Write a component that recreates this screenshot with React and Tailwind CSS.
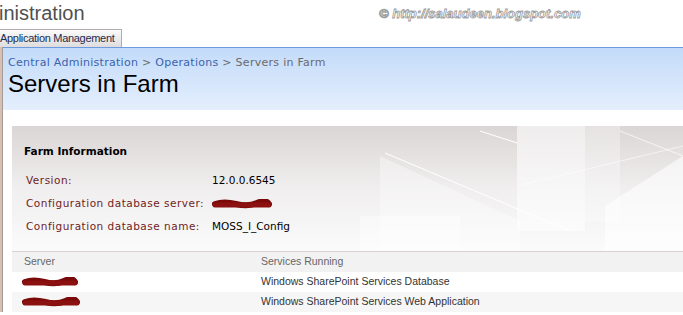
import React from 'react';

const INFO = [
  { label: 'Version:', value: '12.0.0.6545' },
  { label: 'Configuration database server:', redacted: true },
  { label: 'Configuration database name:', value: 'MOSS_I_Config' },
];

const SERVERS = [
  { service: 'Windows SharePoint Services Database', shade: false },
  { service: 'Windows SharePoint Services Web Application', shade: true },
];

function Redacted({ w = 60 }) {
  // scribbled-out name
  return (
    <svg width={w} height="10" viewBox={`0 0 ${w} 10`} className="inline-block align-middle">
      <path
        d={`M3 5 Q${w * 0.2} 2 ${w * 0.4} 5 T${w * 0.75} 4 T${w - 3} 5`}
        stroke="#7a0a0a"
        strokeWidth="6"
        strokeLinecap="round"
        fill="none"
      />
      <path d={`M3 6 L${w - 3} 6`} stroke="#8b1010" strokeWidth="5" strokeLinecap="round" />
    </svg>
  );
}

export default function App() {
  return (
    <div className="w-[683px] h-[315px] overflow-hidden bg-white relative font-['DejaVu_Sans',sans-serif]">
      {/* top title */}
      <div className="h-[29px] flex items-start">
        <span className="font-['Liberation_Sans',sans-serif] text-[20px] leading-[27px] text-[#505050] ml-[-1px] w-[85px] whitespace-nowrap">inistration</span>
        <span className="ml-[295px] mt-[6px] italic font-bold text-[13px] leading-[15px] text-white font-['Liberation_Sans',sans-serif] [-webkit-text-stroke:0.8px_#9a9a9a] whitespace-nowrap">
          © http://salaudeen.blogspot.com
        </span>
      </div>

      {/* tab */}
      <div className="h-[18px] flex">
        <div className="w-[122px] h-[18px] border-t border-r border-[#b3abab] bg-gradient-to-b from-[#fbfbfb] to-[#dedcdc] font-['Liberation_Sans',sans-serif] text-[11px] tracking-[-0.3px] leading-[17px] text-[#1d2b4f] whitespace-nowrap">
          Application Management
        </div>
      </div>

      {/* body with left strip */}
      <div className="flex">
        <div className="w-[2px] bg-[#d9bfb1] shrink-0" />
        <div className="w-px bg-[#a39a9a] shrink-0" />
        <div className="flex-1 min-w-0">
          {/* blue title band */}
          <div className="h-[63px] border-t border-[#6e9be0] bg-gradient-to-b from-[#c3dbf9] to-[#e4effd] pl-[5px] pt-[8px]">
            <div className="text-[11px] leading-[13px] text-[#6a6a6a] tracking-[0.28px] whitespace-nowrap">
              <span className="text-[#3b63ad]">Central Administration</span>
              <span> &gt; </span>
              <span className="text-[#3b63ad]">Operations</span>
              <span> &gt; Servers in Farm</span>
            </div>
            <div className="font-['Liberation_Sans',sans-serif] text-[24px] leading-[28px] text-black mt-[1px]">Servers in Farm</div>
          </div>

          {/* gap */}
          <div className="h-[16px]" />

          {/* farm info panel */}
          <div className="ml-[9px] relative h-[125px] bg-gradient-to-b from-[#dbd6d6] via-[#f0eeee] to-[#fbfbfb] overflow-hidden">
            <svg className="absolute right-0 top-0" width="343" height="125" viewBox="0 0 343 125">
              <rect x="177" y="0" width="68" height="105" fill="#ffffff" opacity="0.55" />
              <rect x="245" y="0" width="35" height="95" fill="#ffffff" opacity="0.3" />
              <polygon points="265,80 343,30 343,125 265,125" fill="#ffffff" opacity="0.6" />
              <polygon points="40,30 180,95 180,125 40,125" fill="#ffffff" opacity="0.35" />
              <polygon points="20,90 120,90 120,125 20,125" fill="#ffffff" opacity="0.4" />
              <line x1="140" y1="5" x2="177" y2="17" stroke="#ffffff" strokeWidth="1" />
              <line x1="45" y1="27" x2="230" y2="105" stroke="#ffffff" strokeWidth="1" />
              <line x1="280" y1="5" x2="343" y2="30" stroke="#ffffff" strokeWidth="1" opacity="0.7" />
              <line x1="177" y1="60" x2="343" y2="20" stroke="#ffffff" strokeWidth="1" opacity="0.6" />
            </svg>
            <div className="relative pl-[12px] pt-[19px]">
              <div className="text-[10.5px] leading-[13px] font-bold text-black">Farm Information</div>
              <div className="mt-[16px] flex flex-col gap-[10px]">
                {INFO.map((row) => (
                  <div key={row.label} className="flex items-center h-[13px] text-[10.5px] leading-[13px]">
                    <span className="w-[188px] pl-[2px] text-[#6e2424] tracking-[0.5px] whitespace-nowrap">{row.label}</span>
                    {row.redacted ? (
                      <Redacted w={60} />
                    ) : (
                      <span className="text-black">{row.value}</span>
                    )}
                  </div>
                ))}
              </div>
            </div>
          </div>

          {/* servers table */}
          <div className="ml-[9px] border-t border-[#d9d1d1] font-['Liberation_Sans',sans-serif] text-[10.5px] text-[#333]">
            <div className="flex h-[20px] items-center bg-[#f2f2f2] text-[#666]">
              <span className="w-[249px] pl-[12px]">Server</span>
              <span>Services Running</span>
            </div>
            {SERVERS.map((s, i) => (
              <div key={i} className={`flex h-[20px] items-center ${s.shade ? 'bg-[#f6f6f6]' : 'bg-white'}`}>
                <span className="w-[249px] pl-[10px]">
                  <Redacted w={i === 0 ? 56 : 58} />
                </span>
                <span>{s.service}</span>
              </div>
            ))}
          </div>
        </div>
      </div>
    </div>
  );
}
